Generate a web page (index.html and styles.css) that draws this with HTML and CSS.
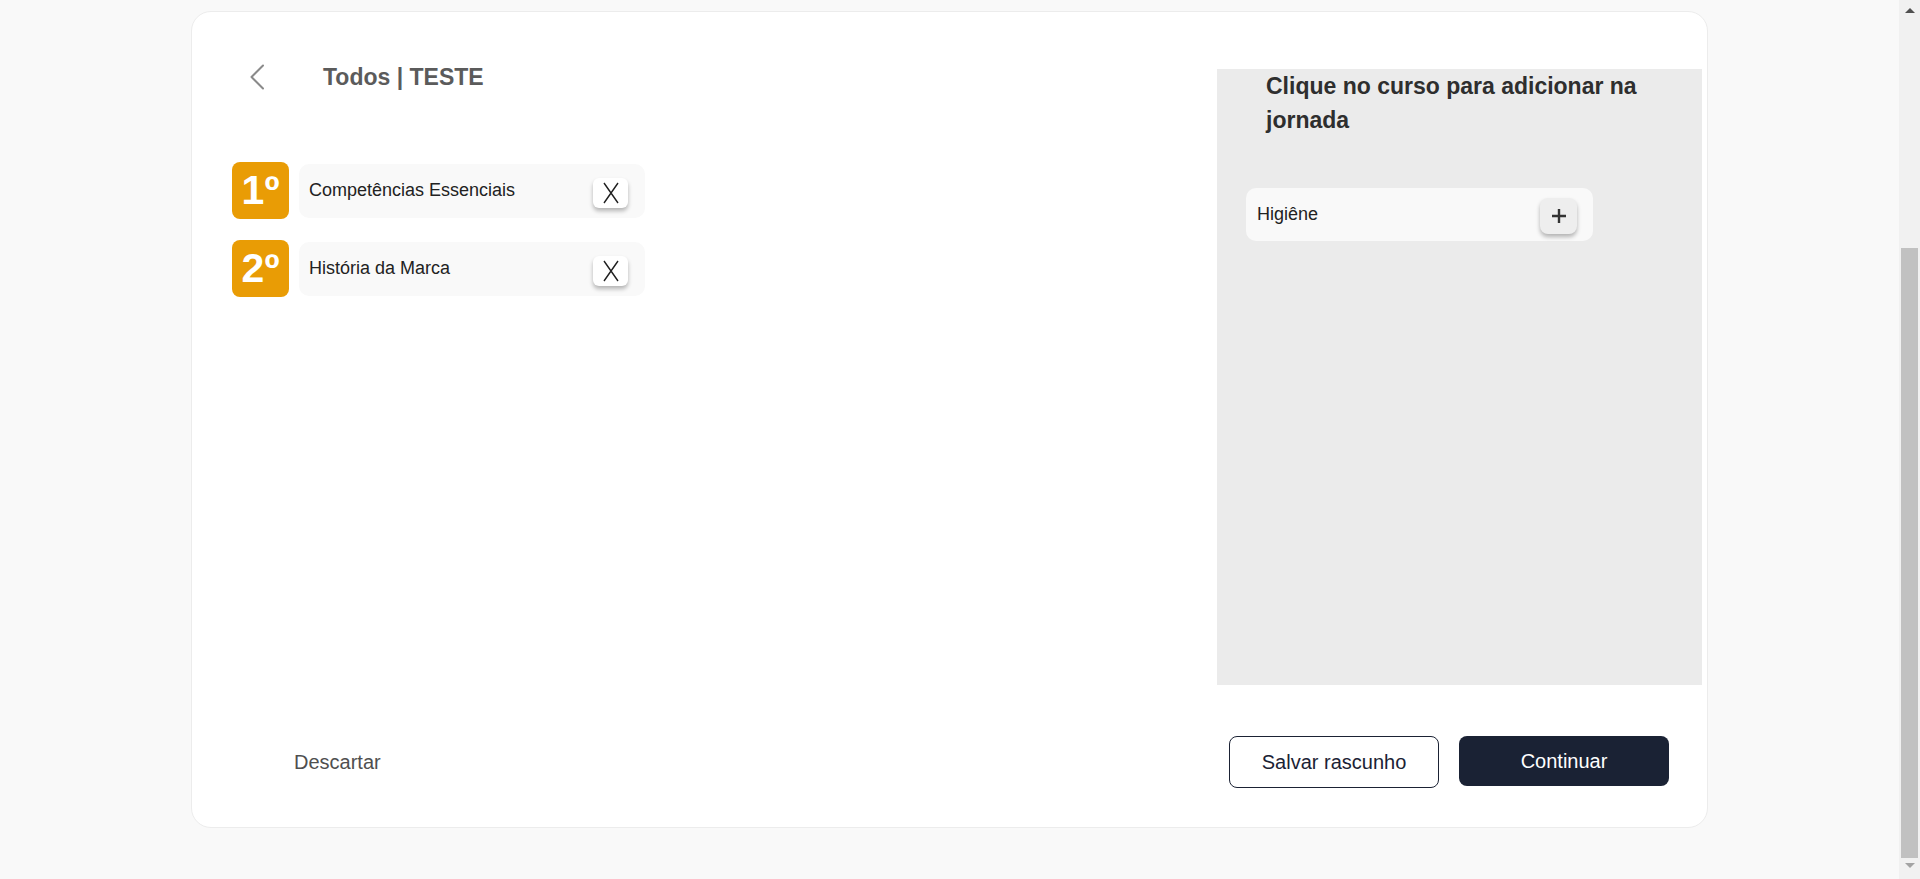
FILE: index.html
```html
<!DOCTYPE html>
<html lang="pt-BR">
<head>
  <meta charset="UTF-8">
  <title>Jornada - TESTE</title>
  <link rel="stylesheet" href="styles.css">
</head>
<body>

  <div class="page">
    <div class="card">
      <div class="main">

        <div class="journey">
          <div class="journey-header">
            <button class="back-btn" aria-label="Voltar">
              <svg width="16" height="26" viewBox="0 0 16 26">
                <polyline points="14,1.5 2.5,13 14,24.5" fill="none" stroke="#8a8a8a" stroke-width="2" stroke-linecap="round" stroke-linejoin="round"/>
              </svg>
            </button>
            <h2 class="journey-title">Todos | TESTE</h2>
          </div>

          <div class="steps">
            <div class="step">
              <div class="step-badge">1º</div>
              <div class="course">
                <span class="course-name">Competências Essenciais</span>
                <button class="course-btn remove" aria-label="Remover">
                  <svg width="16" height="22" viewBox="0 0 16 22">
                    <path d="M1 1 L15 21 M15 1 L1 21" stroke="#1f1f1f" stroke-width="1.4" fill="none"/>
                  </svg>
                </button>
              </div>
            </div>
            <div class="step">
              <div class="step-badge">2º</div>
              <div class="course">
                <span class="course-name">História da Marca</span>
                <button class="course-btn remove" aria-label="Remover">
                  <svg width="16" height="22" viewBox="0 0 16 22">
                    <path d="M1 1 L15 21 M15 1 L1 21" stroke="#1f1f1f" stroke-width="1.4" fill="none"/>
                  </svg>
                </button>
              </div>
            </div>
          </div>
        </div>

        <div class="catalog">
          <h3 class="catalog-title">Clique no curso para adicionar na jornada</h3>
          <div class="catalog-list">
            <div class="course">
              <span class="course-name">Higiêne</span>
              <button class="course-btn add" aria-label="Adicionar">
                <svg width="16" height="16" viewBox="0 0 16 16">
                  <path d="M8 1 V15 M1 8 H15" stroke="#333" stroke-width="2.4" fill="none"/>
                </svg>
              </button>
            </div>
          </div>
        </div>

      </div>

      <div class="footer">
        <button class="link-btn">Descartar</button>
        <div class="actions">
          <button class="btn btn-outline">Salvar rascunho</button>
          <button class="btn btn-dark">Continuar</button>
        </div>
      </div>
    </div>
  </div>

  <!-- barra de rolagem da janela -->
  <div class="scrollbar" aria-hidden="true">
    <span class="scroll-arrow up"></span>
    <span class="scroll-thumb"></span>
    <span class="scroll-arrow down"></span>
  </div>

</body>
</html>
```

FILE: styles.css
```css
html, body {
  margin: 0;
  background-color: #f9f9f9;
  font-family: 'Liberation Sans', Arial, sans-serif;
  overflow: hidden;
}

.page {
  padding: 11px 21px 51px 0;
}

.card {
  width: 1517px;
  box-sizing: border-box;
  margin: 0 auto;
  background-color: #fff;
  border: 1px solid #ececec;
  border-radius: 20px;
  padding: 45px 5px 39px 40px;
}

.main {
  display: grid;
  grid-template-columns: 1fr 485px;
  align-items: start;
}

button {
  font-family: inherit;
  cursor: pointer;
}

/* coluna da jornada */
.journey-header {
  display: flex;
  align-items: center;
  height: 40px;
  padding-left: 17px;
}

.back-btn {
  border: none;
  background: none;
  padding: 0;
  display: flex;
  margin-right: 58px;
}

.journey-title {
  margin: 0;
  font-size: 23px;
  font-weight: bold;
  color: #5b5b5b;
}

.steps {
  margin-top: 65px;
  display: flex;
  flex-direction: column;
  gap: 21px;
}

.step {
  display: flex;
  align-items: center;
  gap: 10px;
}

.step-badge {
  width: 57px;
  height: 57px;
  border-radius: 8px;
  background-color: #e99c05;
  color: #fff;
  font-size: 41px;
  font-weight: bold;
  display: flex;
  align-items: center;
  justify-content: center;
}

.course {
  width: 346px;
  height: 54px;
  box-sizing: border-box;
  background-color: #f9f9f9;
  border-radius: 10px;
  padding: 0 17px 0 10px;
  display: flex;
  align-items: center;
  justify-content: space-between;
}

.course-name {
  font-size: 18px;
  color: #222;
}

.course-btn {
  border: none;
  padding: 0;
  display: flex;
  align-items: center;
  justify-content: center;
  box-shadow: 0 3px 4px rgba(0, 0, 0, 0.28);
  margin-top: 4px;
}

.course-btn.remove {
  width: 35px;
  height: 30px;
  border-radius: 6px;
  background-color: #fff;
}

.course-btn.add {
  width: 37px;
  height: 36px;
  border-radius: 8px;
  background-color: #eeeeee;
  margin-top: 2px;
}

/* coluna do catálogo */
.catalog {
  margin-top: 12px;
  height: 616px;
  background-color: #ebebeb;
}

.catalog-title {
  margin: 0;
  padding: 0 49px;
  font-size: 23px;
  line-height: 34px;
  font-weight: bold;
  color: #2e2e2e;
}

.catalog-list {
  margin-top: 51px;
  padding-left: 29px;
}

.catalog-list .course {
  width: 347px;
  height: 53px;
  padding: 0 16px 0 11px;
}

/* rodapé */
.footer {
  margin-top: 51px;
  padding: 0 33px 0 62px;
  display: flex;
  align-items: center;
  justify-content: space-between;
}

.link-btn {
  border: none;
  background: none;
  padding: 0;
  font-size: 20px;
  color: #4f4f4f;
}

.actions {
  display: flex;
  align-items: flex-start;
  gap: 20px;
}

.btn {
  width: 210px;
  border-radius: 8px;
  font-size: 20px;
}

.btn-outline {
  height: 52px;
  background-color: #fff;
  border: 1px solid #1b2234;
  color: #1b2234;
}

.btn-dark {
  height: 50px;
  background-color: #1a2234;
  border: none;
  color: #fff;
}

/* barra de rolagem */
.scrollbar {
  position: fixed;
  top: 0;
  right: 0;
  width: 21px;
  height: 100vh;
  background-color: #f1f1f1;
  display: flex;
  flex-direction: column;
  align-items: center;
}

.scroll-arrow {
  width: 0;
  height: 0;
  border-left: 5px solid transparent;
  border-right: 5px solid transparent;
}

.scroll-arrow.up {
  margin-top: 8px;
  border-bottom: 5px solid #505050;
}

.scroll-arrow.down {
  margin-top: 5px;
  border-top: 5px solid #a3a3a3;
}

.scroll-thumb {
  margin-top: 235px;
  width: 17px;
  height: 610px;
  background-color: #c1c1c1;
}
```
